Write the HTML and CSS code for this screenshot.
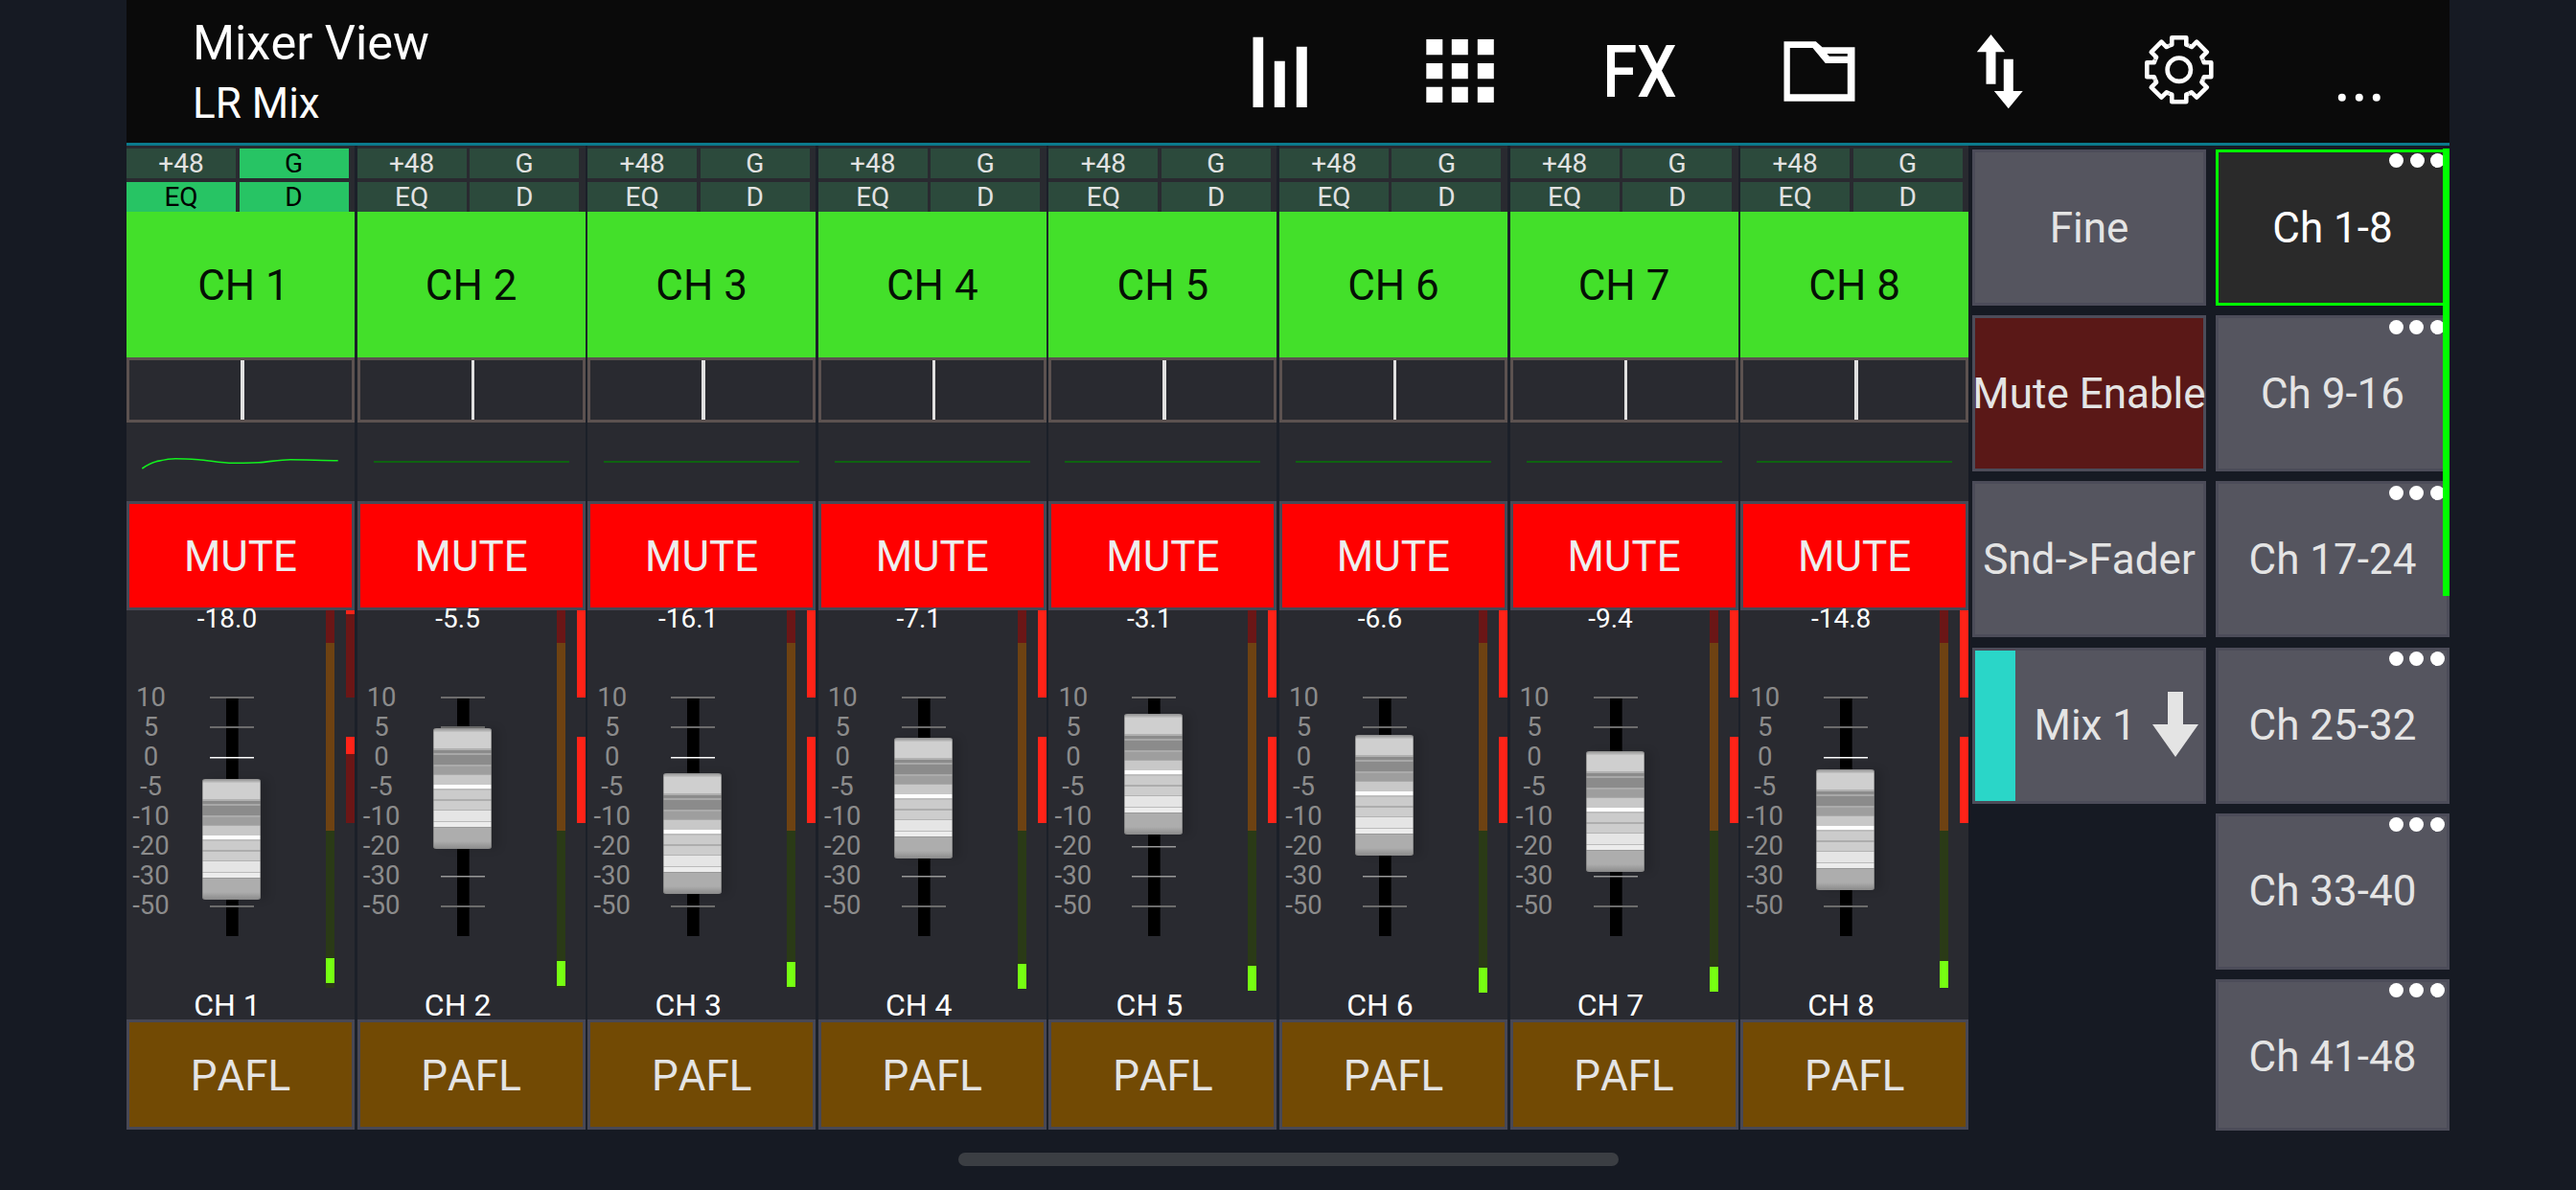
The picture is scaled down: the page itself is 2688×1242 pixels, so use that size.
FILE: index.html
```html
<!DOCTYPE html>
<html lang="en">
<head>
<meta charset="utf-8">
<title>Mixer View</title>
<link rel="stylesheet" href="styles.css">
</head>
<body>
<div class="app">
  <header class="topbar">
    <div class="titles">
      <div class="title">Mixer View</div>
      <div class="subtitle">LR Mix</div>
    </div>
    <nav class="tools">
      <svg class="tool" viewBox="-93.8 0 187.6 149"><path d="M-28.3 38.7h10.7V112h-10.7zM-6 63.7H5V112H-6zM17 48.7h11V112H17z"/></svg>
      <svg class="tool" viewBox="-93.8 0 187.6 149"><path d="M-35.5 41h17v16.3h-17zM-9 41H8v16.3H-9zM18 41h17v16.3H18zM-35.5 66h17v16.3h-17zM-9 66H8v16.3H-9zM18 66h17v16.3H18zM-35.5 90.7h17V107h-17zM-9 90.7H8V107H-9zM18 90.7h17V107H18z"/></svg>
      <div class="tool fx"><span>FX</span></div>
      <svg class="tool" viewBox="-93.8 0 187.6 149"><path fill-rule="evenodd" d="M-37.3 43.3H-4L2.7 49.3H36.7V105.7H-37.3ZM-31 50V98.3H29V66H6L-7.3 50ZM7.7 56 10 58.7H29V56Z"/></svg>
      <svg class="tool" viewBox="-93.8 0 187.6 149"><path d="M-9.3 36 5.3 54.3H-4.3V87.7H-14.3V54.3H-24ZM4 61.7H14V95H24L9 113.3-6 95H4Z"/></svg>
      <svg class="tool" viewBox="-93.8 0 187.6 149">
        <defs><path id="tooth" d="M-10.3-25-7.5-26V-33.5H7.5V-26L10.3-25"/></defs>
        <g class="gear" transform="translate(0 72.7)">
          <use href="#tooth"/><use href="#tooth" transform="rotate(45)"/><use href="#tooth" transform="rotate(90)"/><use href="#tooth" transform="rotate(135)"/><use href="#tooth" transform="rotate(180)"/><use href="#tooth" transform="rotate(225)"/><use href="#tooth" transform="rotate(270)"/><use href="#tooth" transform="rotate(315)"/>
          <circle r="12.2"/>
        </g>
      </svg>
      <svg class="tool" viewBox="-93.8 0 187.6 149"><circle cx="-18" cy="101.7" r="4"/><circle cy="101.7" r="4"/><circle cx="18" cy="101.7" r="4"/></svg>
    </nav>
  </header>

  <main class="desk">
    <section class="strips">

      <article class="strip">
        <div class="sw"><button>+48</button><button class="on">G</button><button class="on">EQ</button><button class="on">D</button></div>
        <div class="name first">CH 1</div>
        <div class="pan"><i></i></div>
        <div class="eq"><svg class="curve" viewBox="0 0 238 82"><path d="M16.3 48C22 44 27 41.5 31 40.7S43 37.7 51 37.7 65 38 75 38.7 100 42.3 111 42.3 128 42.3 138 41.7 160 38.7 171 38.7 205 39.5 220.7 39.7"/></svg></div>
        <div class="mute">MUTE</div>
        <div class="fader">
          <div class="main">
            <div class="value">-18.0</div>
            <div class="channel">
              <div class="scale"><span>10</span><span>5</span><span>0</span><span>-5</span><span>-10</span><span>-20</span><span>-30</span><span>-50</span></div>
              <div class="rail"><div class="knob" style="top:86px"></div></div>
            </div>
            <div class="label">CH 1</div>
          </div>
          <div class="meter"><b class="m-red"></b><b class="m-amber"></b><b class="m-green"></b><u style="top:363px"></u></div>
          <div class="peak"><div class="p1 dim"><s style="height:4px"></s></div><div class="p2 dim"><s style="height:18px"></s></div></div>
        </div>
        <div class="pafl">PAFL</div>
      </article>

      <article class="strip">
        <div class="sw"><button>+48</button><button>G</button><button>EQ</button><button>D</button></div>
        <div class="name">CH 2</div>
        <div class="pan"><i></i></div>
        <div class="eq"><div class="flat"></div></div>
        <div class="mute">MUTE</div>
        <div class="fader">
          <div class="main">
            <div class="value">-5.5</div>
            <div class="channel">
              <div class="scale"><span>10</span><span>5</span><span>0</span><span>-5</span><span>-10</span><span>-20</span><span>-30</span><span>-50</span></div>
              <div class="rail"><div class="knob" style="top:33px"></div></div>
            </div>
            <div class="label">CH 2</div>
          </div>
          <div class="meter"><b class="m-red"></b><b class="m-amber"></b><b class="m-green"></b><u style="top:365.5px"></u></div>
          <div class="peak"><div class="p1"></div><div class="p2"></div></div>
        </div>
        <div class="pafl">PAFL</div>
      </article>

      <article class="strip">
        <div class="sw"><button>+48</button><button>G</button><button>EQ</button><button>D</button></div>
        <div class="name">CH 3</div>
        <div class="pan"><i></i></div>
        <div class="eq"><div class="flat"></div></div>
        <div class="mute">MUTE</div>
        <div class="fader">
          <div class="main">
            <div class="value">-16.1</div>
            <div class="channel">
              <div class="scale"><span>10</span><span>5</span><span>0</span><span>-5</span><span>-10</span><span>-20</span><span>-30</span><span>-50</span></div>
              <div class="rail"><div class="knob" style="top:80px"></div></div>
            </div>
            <div class="label">CH 3</div>
          </div>
          <div class="meter"><b class="m-red"></b><b class="m-amber"></b><b class="m-green"></b><u style="top:367px"></u></div>
          <div class="peak"><div class="p1"></div><div class="p2"></div></div>
        </div>
        <div class="pafl">PAFL</div>
      </article>

      <article class="strip">
        <div class="sw"><button>+48</button><button>G</button><button>EQ</button><button>D</button></div>
        <div class="name">CH 4</div>
        <div class="pan"><i></i></div>
        <div class="eq"><div class="flat"></div></div>
        <div class="mute">MUTE</div>
        <div class="fader">
          <div class="main">
            <div class="value">-7.1</div>
            <div class="channel">
              <div class="scale"><span>10</span><span>5</span><span>0</span><span>-5</span><span>-10</span><span>-20</span><span>-30</span><span>-50</span></div>
              <div class="rail"><div class="knob" style="top:43px"></div></div>
            </div>
            <div class="label">CH 4</div>
          </div>
          <div class="meter"><b class="m-red"></b><b class="m-amber"></b><b class="m-green"></b><u style="top:369px"></u></div>
          <div class="peak"><div class="p1"></div><div class="p2"></div></div>
        </div>
        <div class="pafl">PAFL</div>
      </article>

      <article class="strip">
        <div class="sw"><button>+48</button><button>G</button><button>EQ</button><button>D</button></div>
        <div class="name">CH 5</div>
        <div class="pan"><i></i></div>
        <div class="eq"><div class="flat"></div></div>
        <div class="mute">MUTE</div>
        <div class="fader">
          <div class="main">
            <div class="value">-3.1</div>
            <div class="channel">
              <div class="scale"><span>10</span><span>5</span><span>0</span><span>-5</span><span>-10</span><span>-20</span><span>-30</span><span>-50</span></div>
              <div class="rail"><div class="knob" style="top:18px"></div></div>
            </div>
            <div class="label">CH 5</div>
          </div>
          <div class="meter"><b class="m-red"></b><b class="m-amber"></b><b class="m-green"></b><u style="top:371px"></u></div>
          <div class="peak"><div class="p1"></div><div class="p2"></div></div>
        </div>
        <div class="pafl">PAFL</div>
      </article>

      <article class="strip">
        <div class="sw"><button>+48</button><button>G</button><button>EQ</button><button>D</button></div>
        <div class="name">CH 6</div>
        <div class="pan"><i></i></div>
        <div class="eq"><div class="flat"></div></div>
        <div class="mute">MUTE</div>
        <div class="fader">
          <div class="main">
            <div class="value">-6.6</div>
            <div class="channel">
              <div class="scale"><span>10</span><span>5</span><span>0</span><span>-5</span><span>-10</span><span>-20</span><span>-30</span><span>-50</span></div>
              <div class="rail"><div class="knob" style="top:40px"></div></div>
            </div>
            <div class="label">CH 6</div>
          </div>
          <div class="meter"><b class="m-red"></b><b class="m-amber"></b><b class="m-green"></b><u style="top:373px"></u></div>
          <div class="peak"><div class="p1"></div><div class="p2"></div></div>
        </div>
        <div class="pafl">PAFL</div>
      </article>

      <article class="strip">
        <div class="sw"><button>+48</button><button>G</button><button>EQ</button><button>D</button></div>
        <div class="name">CH 7</div>
        <div class="pan"><i></i></div>
        <div class="eq"><div class="flat"></div></div>
        <div class="mute">MUTE</div>
        <div class="fader">
          <div class="main">
            <div class="value">-9.4</div>
            <div class="channel">
              <div class="scale"><span>10</span><span>5</span><span>0</span><span>-5</span><span>-10</span><span>-20</span><span>-30</span><span>-50</span></div>
              <div class="rail"><div class="knob" style="top:57px"></div></div>
            </div>
            <div class="label">CH 7</div>
          </div>
          <div class="meter"><b class="m-red"></b><b class="m-amber"></b><b class="m-green"></b><u style="top:372px"></u></div>
          <div class="peak"><div class="p1"></div><div class="p2"></div></div>
        </div>
        <div class="pafl">PAFL</div>
      </article>

      <article class="strip">
        <div class="sw"><button>+48</button><button>G</button><button>EQ</button><button>D</button></div>
        <div class="name">CH 8</div>
        <div class="pan"><i></i></div>
        <div class="eq"><div class="flat"></div></div>
        <div class="mute">MUTE</div>
        <div class="fader">
          <div class="main">
            <div class="value">-14.8</div>
            <div class="channel">
              <div class="scale"><span>10</span><span>5</span><span>0</span><span>-5</span><span>-10</span><span>-20</span><span>-30</span><span>-50</span></div>
              <div class="rail"><div class="knob" style="top:76px"></div></div>
            </div>
            <div class="label">CH 8</div>
          </div>
          <div class="meter"><b class="m-red"></b><b class="m-amber"></b><b class="m-green"></b><u style="top:366px;height:28px"></u></div>
          <div class="peak"><div class="p1"></div><div class="p2"></div></div>
        </div>
        <div class="pafl">PAFL</div>
      </article>
    </section>

    <section class="panel">
      <div class="key">Fine</div>
      <div class="key danger">Mute Enable</div>
      <div class="key">Snd-&gt;Fader</div>
      <div class="key mix">
        <span class="swatch"></span>
        <span class="mix-name">Mix 1</span>
        <svg class="down" viewBox="0 0 48 68"><path d="M16 0H32V34H48L24 68 0 34H16Z"/></svg>
      </div>
    </section>

    <section class="banks">
      <div class="key active"><span class="more"><i></i><i></i><i></i></span>Ch 1-8</div>
      <div class="key"><span class="more"><i></i><i></i><i></i></span>Ch 9-16</div>
      <div class="key"><span class="more"><i></i><i></i><i></i></span>Ch 17-24</div>
      <div class="key"><span class="more"><i></i><i></i><i></i></span>Ch 25-32</div>
      <div class="key"><span class="more"><i></i><i></i><i></i></span>Ch 33-40</div>
      <div class="key last"><span class="more"><i></i><i></i><i></i></span>Ch 41-48</div>
      <div class="scrollbar"></div>
    </section>
  </main>
</div>
<div class="home"></div>
</body>
</html>
```

FILE: styles.css
```css
* { box-sizing: border-box; }
html, body { margin: 0; padding: 0; }
body {
  width: 2688px;
  height: 1242px;
  overflow: hidden;
  background: #161a23;
  color: #e4e4e4;
  font-family: Roboto, "Liberation Sans", sans-serif;
  font-kerning: none;
}
.app { width: 2424px; margin-left: 132px; }

/* top bar */
.topbar {
  height: 152px;
  display: flex;
  justify-content: space-between;
  background: #0a0a0a;
  border-bottom: 3px solid #0b7a8c;
}
.titles { padding: 15px 0 0 69px; color: #fff; }
.title { font-size: 50.5px; line-height: 60px; }
.subtitle { font-size: 44px; line-height: 52px; margin-top: 7px; }
.tools { display: flex; margin-right: .5px; }
.tool { width: 187.6px; height: 149px; fill: #fff; display: block; }
.fx { display: flex; align-items: center; justify-content: center; font-size: 76px; font-weight: 500; line-height: 1; color: #fff; }
.fx span { display: block; transform: scaleX(.86); }
.gear { fill: none; stroke: #fff; stroke-width: 4.6; stroke-linejoin: round; }

/* layout */
.desk { display: flex; height: 1027px; }
.strips { display: flex; gap: 2.6px; width: 1922px; background: #1b2029; }
.strip { width: 238px; flex: none; background: #292a30; }

/* toggles */
.sw {
  height: 69px;
  padding-top: 3px;
  display: grid;
  grid-template-columns: 114px 114px;
  grid-template-rows: 31px 31px;
  column-gap: 3.5px;
  row-gap: 4px;
}
.sw button {
  border: 0;
  padding: 0;
  margin: 0;
  display: block;
  height: 31px;
  background: #2c4a3c;
  color: #e2e2e2;
  font: 28px/27px Roboto, sans-serif;
  font-kerning: none;
  text-align: center;
  overflow: visible;
  align-self: start;
}
.sw button.on { background: #27c464; color: #000; }

.name {
  height: 152px;
  background: #43e02a;
  color: #051005;
  font-size: 44px;
  padding-top: 2px;
  display: flex;
  align-items: center;
  justify-content: center;
}
.name.first { padding-left: 6px; }
.pan {
  height: 68px;
  border: 3.5px solid #5c5250;
  background: #292a30;
  display: flex;
  justify-content: center;
  padding-left: 3.5px;
}
.pan i { display: block; width: 3.5px; background: #e0e0e0; }
.eq { height: 82px; }
.curve { display: block; width: 238px; height: 82px; fill: none; stroke: #12ee1e; stroke-width: 1.6; }
.flat { height: 2px; background: #0e6210; margin: 0 17px; position: relative; top: 40px; }

.mute, .pafl {
  border: 3px solid #484855;
  font-size: 44px;
  padding-top: 2px;
  display: flex;
  align-items: center;
  justify-content: center;
}
.mute { height: 114px; background: #ff0000; color: #eeeeee; }
.pafl { height: 115px; background: #724a04; color: #e4e4e4; }

/* fader body */
.fader { height: 427px; display: flex; }
.main { width: 208px; display: flex; flex-direction: column; }
.value { font-size: 28px; line-height: 18px; height: 18px; width: 210px; text-align: center; color: #fff; }
.channel { display: flex; align-items: flex-start; margin-top: 56.5px; }
.scale { width: 51px; display: flex; flex-direction: column; font-size: 27.5px; color: #8c8c8c; text-align: center; }
.scale span { height: 31.14px; line-height: 31.14px; }
.rail {
  position: relative;
  width: 46px;
  height: 250px;
  margin: 15.5px 0 0 36px;
  background-repeat: no-repeat;
  background-image:
    linear-gradient(#6c6c6c, #6c6c6c), linear-gradient(#6c6c6c, #6c6c6c),
    linear-gradient(#fff, #fff),
    linear-gradient(#777, #777), linear-gradient(#777, #777),
    linear-gradient(#999, #999), linear-gradient(#999, #999),
    linear-gradient(#6c6c6c, #6c6c6c),
    linear-gradient(#000, #000);
  background-size:
    46px 2px, 46px 2px,
    46px 1.5px,
    46px 1.5px, 46px 1.5px,
    46px 1.5px, 46px 1.5px,
    46px 2px,
    12.7px 249px;
  background-position:
    0 0, 0 31px,
    0 62.5px,
    0 93.5px, 0 124.5px,
    0 155.5px, 0 186.5px,
    0 218px,
    17px 1px;
}
.knob {
  position: absolute;
  left: -8px;
  width: 61px;
  height: 126px;
  border-radius: 3px;
  background: linear-gradient(to bottom,
    #8e8e8e 0, #c6c6c6 4px, #cfcfcf 4px, #cfcfcf 21px,
    #b0b0b0 21px, #b0b0b0 23px, #8b8b8b 23px, #8b8b8b 26px,
    #a8a8a8 26px, #a8a8a8 28px, #8b8b8b 28px, #8b8b8b 38px,
    #ababab 38px, #ababab 40px, #9e9e9e 40px, #9e9e9e 48px,
    #aaaaaa 48px, #aaaaaa 49px, #c8c8c8 49px, #c8c8c8 59px,
    #ffffff 59px, #ffffff 63px, #bdbdbd 63px, #bdbdbd 65px,
    #cbcbcb 65px, #cbcbcb 74px, #adadad 74px, #adadad 76px,
    #cdcdcd 76px, #cdcdcd 85px, #b3b3b3 85px, #b3b3b3 86px,
    #e5e5e5 86px, #e5e5e5 97px, #bbbbbb 97px, #bbbbbb 98px,
    #ececec 98px, #ececec 103px, #999999 103px, #999999 104px,
    #adadad 104px, #adadad 118px, #8a8a8a 126px);
  box-shadow: inset 1px 0 rgba(110,110,110,.55), inset -1px 0 rgba(110,110,110,.55), 8px 0 8px rgba(0,0,0,.12);
}
.label { margin-top: auto; font-size: 32px; line-height: 30px; width: 210px; text-align: center; color: #fff; }
.meter { position: relative; width: 9px; display: flex; flex-direction: column; }
.meter b { display: block; }
.m-red { height: 34px; background: #6b1616; }
.m-amber { height: 196px; background: #6e4212; }
.m-green { height: 164px; background: #2a3a16; }
.meter u { position: absolute; left: 0; width: 9px; height: 26px; background: #76ff12; }
.peak { width: 9px; margin-left: 12px; display: flex; flex-direction: column; }
.p1, .p2 { background: #ff2318; }
.p1 { height: 91px; }
.p2 { height: 90px; margin-top: 41px; }
.dim { background: #6b1616; }
.dim s { display: block; background: #ff2318; }

/* keys */
.panel, .banks { width: 244px; flex: none; display: flex; flex-direction: column; gap: 10.2px; padding-top: 4px; }
.panel { margin-left: 4px; }
.banks { margin-left: 10px; position: relative; }
.key {
  position: relative;
  height: 163px;
  flex: none;
  background: #55555f;
  border: 3px solid #4c4c59;
  color: #e4e4e4;
  font-size: 44px;
  white-space: nowrap;
  display: flex;
  align-items: center;
  justify-content: center;
}
.key.last { height: 158px; padding-top: 5px; }
.danger { background: #5a1817; }
.active { background: #2a2a2a; color: #fff; border: 3.5px solid #00ff00; }
.mix { justify-content: flex-start; }
.swatch { align-self: stretch; width: 41.5px; background: #2ad6c8; }
.mix-name { margin-left: 20px; }
.down { width: 48px; height: 68px; margin-left: 17px; fill: #e4e4e4; position: relative; top: -1px; }
.more { position: absolute; top: 1.5px; right: 2.5px; display: flex; gap: 6.5px; }
.active .more { top: 1px; right: 2px; }
.more i { display: block; width: 15px; height: 15px; border-radius: 50%; background: #fff; }
.scrollbar { position: absolute; top: 3px; right: 0; width: 7px; height: 467px; background: #00ff00; }

.home { width: 689px; height: 14px; margin: 24px auto 0; border-radius: 7px; background: #3b3e43; }
```
